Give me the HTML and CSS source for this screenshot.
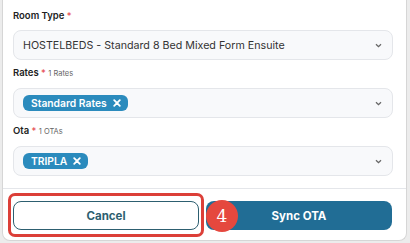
FILE: index.html
```html
<!doctype html>
<html lang="en">
<head>
  <meta charset="utf-8"/>
  <title>Sync OTA</title>
  <meta name="viewport" content="width=device-width, initial-scale=1"/>
  <link rel="stylesheet" href="styles.css">
</head>
<body>
  <div class="modal">
    <div class="modal-body">
      <div class="field">
        <label class="label">Room Type <span class="req">*</span></label>
        <div class="select">
          <span class="value">HOSTELBEDS - Standard 8 Bed Mixed Form Ensuite</span>
          <svg class="chev" width="7" height="5" viewBox="0 0 7 5"><path d="M1 1.2 3.5 3.7 6 1.2" fill="none" stroke="#666" stroke-width="1.3"/></svg>
        </div>
      </div>

      <div class="field">
        <label class="label">Rates <span class="req">*</span> <span class="count">1 Rates</span></label>
        <div class="select">
          <span class="chip">Standard Rates
            <svg width="8" height="8" viewBox="0 0 8 8"><path d="M1.2 1.2 6.8 6.8M6.8 1.2 1.2 6.8" stroke="#fff" stroke-width="1.8" stroke-linecap="round"/></svg>
          </span>
          <svg class="chev" width="7" height="5" viewBox="0 0 7 5"><path d="M1 1.2 3.5 3.7 6 1.2" fill="none" stroke="#666" stroke-width="1.3"/></svg>
        </div>
      </div>

      <div class="field">
        <label class="label">Ota <span class="req">*</span> <span class="count">1 OTAs</span></label>
        <div class="select">
          <span class="chip">TRIPLA
            <svg width="8" height="8" viewBox="0 0 8 8"><path d="M1.2 1.2 6.8 6.8M6.8 1.2 1.2 6.8" stroke="#fff" stroke-width="1.8" stroke-linecap="round"/></svg>
          </span>
          <svg class="chev" width="7" height="5" viewBox="0 0 7 5"><path d="M1 1.2 3.5 3.7 6 1.2" fill="none" stroke="#666" stroke-width="1.3"/></svg>
        </div>
      </div>
    </div>

    <div class="modal-footer">
      <div class="btn-wrap">
        <button class="btn btn-outline">Cancel</button>
        <span class="highlight"></span>
      </div>
      <div class="btn-wrap">
        <button class="btn btn-primary">Sync OTA</button>
        <span class="step">4</span>
      </div>
    </div>
  </div>
</body>
</html>
```

FILE: styles.css
```css
:root{
  --clr-border:#e4e6ea;
  --clr-field:#f8f9fb;
  --clr-chip:#2b8bbd;
  --clr-primary:#216d95;
  --clr-teal:#2d5f70;
  --clr-red:#dc3f38;
}
*{box-sizing:border-box;margin:0;padding:0}
html,body{height:100%;overflow:hidden}
body{background:#ececec;font-family:"Inter","Open Sans",Arial,sans-serif;color:#222}

.modal{
  margin-left:2px;
  width:405px;
  height:241px;
  background:#fff;
  border:1px solid #d6d6d6;
  border-top:none;
  border-radius:0 0 8px 8px;
  display:flex;
  flex-direction:column;
}

/* ---------- FIELDS ---------- */
.modal-body{padding:9px 13px 12px 10px;display:flex;flex-direction:column;gap:6px}
.field{display:flex;flex-direction:column;gap:7px}
.label{font-size:9.5px;font-weight:600;line-height:14px;color:#222}
.req{color:#e5484d;font-weight:400}
.count{font-size:7.5px;font-weight:400;color:#666}

.select{
  height:30px;
  display:flex;
  align-items:center;
  padding:0 10px 0 9px;
  background:var(--clr-field);
  border:1px solid var(--clr-border);
  border-radius:8px;
}
.value{flex:1;font-size:10.7px;color:#333;white-space:nowrap}
.chev{margin-left:auto;flex-shrink:0}

.chip{
  display:inline-flex;
  align-items:center;
  gap:6px;
  height:16px;
  padding:0 7px 0 8px;
  background:var(--clr-chip);
  color:#fff;
  font-size:10.3px;
  font-weight:600;
  border-radius:6px;
}

/* ---------- FOOTER ---------- */
.modal-footer{
  border-top:1px solid var(--clr-border);
  margin-top:auto;
  padding:12px 14px 11px 10px;
  display:flex;
  gap:7px;
}
.btn-wrap{position:relative;flex:1;display:flex}
.btn{
  flex:1;
  height:29px;
  border-radius:8px;
  font-family:inherit;
  font-size:11.5px;
  font-weight:700;
  cursor:pointer;
}
.btn-outline{background:#fff;border:1px solid var(--clr-teal);color:var(--clr-teal)}
.btn-primary{background:var(--clr-primary);border:none;color:#fff}

.highlight{
  position:absolute;
  inset:-8px -5px -7px -5px;
  border:3px solid var(--clr-red);
  border-radius:7px;
  pointer-events:none;
}
.step{
  position:absolute;
  left:0;
  top:-1px;
  width:32px;
  height:32px;
  border-radius:50%;
  background:#e5483e;
  color:#fff;
  font-family:"DejaVu Serif","Liberation Serif",serif;
  font-size:17px;
  line-height:32px;
  text-align:center;
}
```
